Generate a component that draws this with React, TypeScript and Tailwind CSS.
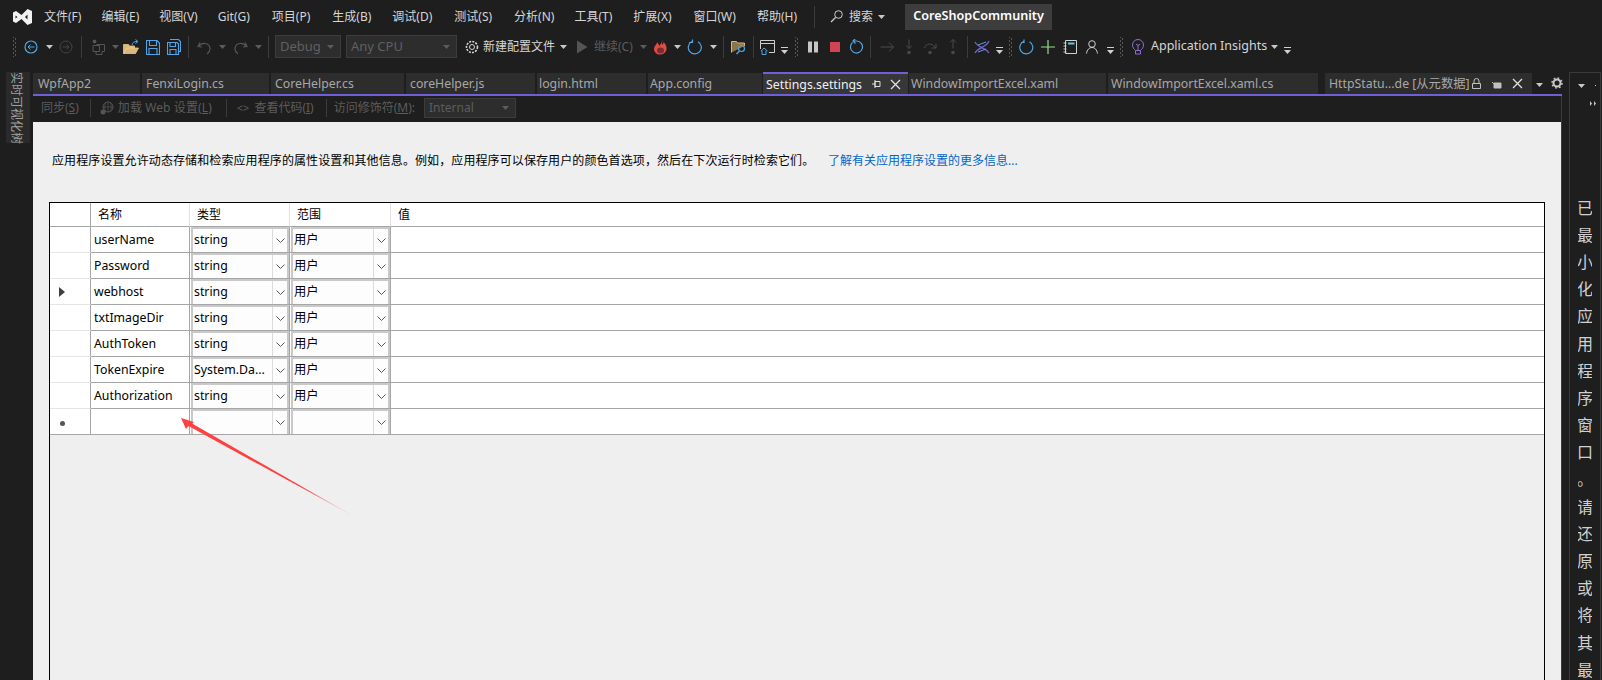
import type { ReactNode } from 'react';

const Caret = ({ className = '', color = '#c8c8c8' }: { className?: string; color?: string }) => (
  <svg width="7" height="4" viewBox="0 0 7 4" className={`shrink-0 ${className}`}>
    <path d="M0 0h7L3.5 4z" fill={color} />
  </svg>
);

const DimCaret = ({ className = '' }: { className?: string }) => <Caret className={className} color="#5c5c5c" />;

const Sep = ({ className = '' }: { className?: string }) => (
  <div className={`h-[22px] w-px shrink-0 bg-[#3c3c3c] ${className}`} />
);

const Grip = ({ className = '' }: { className?: string }) => (
  <svg width="4" height="20" viewBox="0 0 4 20" className={`shrink-0 ${className}`}>
    {[0, 2, 4, 6, 8, 10, 12, 14, 16, 18].map((y) => (
      <g key={y} fill="#5a5a5a">
        <rect x={y % 4 === 0 ? 0 : 2} y={y} width="1" height="1" />
        <rect x={y % 4 === 0 ? 2 : 0} y={y + 1} width="1" height="1" />
      </g>
    ))}
  </svg>
);

const SmallDrop = ({ className = '' }: { className?: string }) => (
  <svg width="7" height="8" viewBox="0 0 7 8" className={`mt-[8px] shrink-0 ${className}`}>
    <path d="M0 0h7v1H0zM0 3h7L3.5 7z" fill="#d0d0d0" />
  </svg>
);

const Ico = ({ w, h = 16, children, className = '' }: { w: number; h?: number; children: ReactNode; className?: string }) => (
  <svg width={w} height={h} viewBox={`0 0 ${w} ${h}`} fill="none" className={`shrink-0 ${className}`}>
    {children}
  </svg>
);

const menus = [
  ['文件(F)', 'ml-[44px]'],
  ['编辑(E)', 'ml-[20px]'],
  ['视图(V)', 'ml-[20px]'],
  ['Git(G)', 'ml-[20px]'],
  ['项目(P)', 'ml-[22px]'],
  ['生成(B)', 'ml-[22px]'],
  ['调试(D)', 'ml-[21px]'],
  ['测试(S)', 'ml-[22px]'],
  ['分析(N)', 'ml-[22px]'],
  ['工具(T)', 'ml-[20px]'],
  ['扩展(X)', 'ml-[21px]'],
  ['窗口(W)', 'ml-[22px]'],
  ['帮助(H)', 'ml-[21px]'],
];

const tabs = [
  ['WpfApp2', 'w-[107px]', 'ml-0', 'pl-[5px]'],
  ['FenxiLogin.cs', 'w-[127px]', 'ml-[2px]', 'pl-[4px]'],
  ['CoreHelper.cs', 'w-[133px]', 'ml-[2px]', 'pl-[4px]'],
  ['coreHelper.js', 'w-[129px]', 'ml-[2px]', 'pl-[4px]'],
  ['login.html', 'w-[109px]', 'ml-[2px]', 'pl-[2px]'],
];

const rows = [
  ['userName', 'string', '用户'],
  ['Password', 'string', '用户'],
  ['webhost', 'string', '用户'],
  ['txtImageDir', 'string', '用户'],
  ['AuthToken', 'string', '用户'],
  ['TokenExpire', 'System.Da...', '用户'],
  ['Authorization', 'string', '用户'],
  ['', '', ''],
];

const sideText = '已最小化应用程序窗口。请还原或将其最'.split('');

const Combo = ({ text }: { text: string }) => (
  <div className="flex h-full items-stretch border-b border-r border-[#a6a6a6] pl-px">
    <div className="flex min-w-0 flex-1 border-2 border-b-0 border-[#c9c9c9] bg-[#fdfdfd]">
      <div className="flex-1 truncate pl-[1px] leading-[22px]">{text}</div>
      <div className="flex w-[15px] items-center justify-center border-l border-[#dcdcdc]">
        <svg width="9" height="5" viewBox="0 0 9 5" fill="none">
          <path d="M.5.5l4 4 4-4" stroke="#555" />
        </svg>
      </div>
    </div>
  </div>
);

const HeaderCell = ({ text, className = '' }: { text: string; className?: string }) => (
  <div className={`border-b border-r border-b-[#a6a6a6] border-r-[#e2e2e2] pl-[7px] leading-[23px] ${className}`}>{text}</div>
);

export default function App() {
  return (
    <div className="relative flex h-[680px] w-[1602px] flex-col overflow-hidden bg-[#1e1e1e] font-['Noto_Sans','Noto_Sans_CJK_SC',sans-serif] text-[12px] text-[#d6d6d6]">
      {/* title bar */}
      <div className="flex h-[33px] shrink-0 items-center">
        <svg width="20" height="18" viewBox="0 0 20 18" className="absolute left-[12px] top-[8px]">
          <path
            fillRule="evenodd"
            d="M1 4.500 4 3l5.500 4L15.500 1 20 3v12l-4.500 2-6-6L4 15l-3-1.500zM3.500 7.500v3L5.500 9zM15.500 6.500 13 9l2.500 2.500z"
            fill="#f2f2f2"
          />
        </svg>
        {menus.map(([label, ml]) => (
          <span key={label} className={`${ml} whitespace-nowrap`}>
            {label}
          </span>
        ))}
        <div className="ml-[17px] h-[22px] w-px bg-[#3c3c3c]" />
        <Ico w={13} h={13} className="ml-[15px]">
          <circle cx="8.500" cy="4.500" r="3.800" stroke="#cfcfcf" />
          <path d="M5.500 7.500 1 12" stroke="#cfcfcf" strokeWidth="1.300" />
        </Ico>
        <span className="ml-[6px]">搜索</span>
        <Caret className="ml-[5px]" />
        <div className="ml-[20px] flex h-[26px] w-[147px] items-center justify-center bg-[#3d3d3d] text-[12.6px] font-semibold text-white">
          CoreShopCommunity
        </div>
      </div>

      {/* main toolbar */}
      <div className="flex h-[27px] shrink-0 items-center">
        <Grip className="ml-[13px]" />
        <Ico w={14} className="ml-[7px]">
          <circle cx="7" cy="8" r="6" stroke="#4ea6e6" strokeWidth="1.200" />
          <path d="M10.500 8h-6.500M6.500 5.500 4 8l2.500 2.500" stroke="#4ea6e6" />
        </Ico>
        <Caret className="ml-[8px]" />
        <Ico w={14} className="ml-[6px]">
          <circle cx="7" cy="8" r="6" stroke="#444" />
          <path d="M3.500 8h6.500M7.500 5.500 10 8l-2.500 2.500" stroke="#444" />
        </Ico>
        <Sep className="ml-[8px]" />
        <Ico w={14} className="ml-[9px]">
          <path d="M5.500 5.500h8v7h-2.500v3h-6v-3M2 6.500h6.500v6H2z" stroke="#555" />
          <path d="M3.500.5v4M1.500 2.500h4M2 1l3 3M5 1 2 4" stroke="#555" />
        </Ico>
        <DimCaret className="ml-[7px]" />
        <Ico w={16} className="ml-[4px]">
          <path d="M.5 14.500V5.500h5l1 1.500h5v2H4l-3.500 5.500 3.500-5.500h11.500l-3 5.500z" fill="#dcb67a" stroke="#e8c88c" strokeWidth=".8" />
          <path d="M9 6c.5-2.500 2-3.500 5-3.500M12.500.5l2.500 2-2.500 2" stroke="#4ea6e6" />
        </Ico>
        <Ico w={14} className="ml-[7px]">
          <path d="M.5 1.500h10.500l2.500 2.500v11.500H.5zM3.500 1.500v5h7v-5M3 15.500v-6h8v6" stroke="#4ea6e6" strokeWidth="1.100" />
        </Ico>
        <Ico w={14} className="ml-[7px]">
          <path d="M3 .5h8.500l2 2v10h-2M.5 3.500h9.500l1.500 1.500v10.500H.5zM3 3.500v4h5.500v-4M3 15.500v-5h6v5" stroke="#4ea6e6" strokeWidth="1.100" />
        </Ico>
        <Sep className="ml-[7px]" />
        <Ico w={14} className="ml-[8px]">
          <path d="M3 3.500 1 7.500l4 .5M1.500 7.500C5 3 12 3.500 13 9c.3 2.500-1 4.500-3 6" stroke="#555" strokeWidth="1.200" />
        </Ico>
        <DimCaret className="ml-[8px]" />
        <Ico w={14} className="ml-[8px]">
          <path d="M11 3.500l2 4-4 .5M12.500 7.500C9 3 2 3.500 1 9c-.3 2.500 1 4.500 3 6" stroke="#555" strokeWidth="1.200" />
        </Ico>
        <DimCaret className="ml-[7px]" />
        <Sep className="ml-[6px]" />
        <div className="ml-[6px] flex h-[23px] w-[66px] items-center justify-between border border-[#3c3c3c] bg-[#2d2d2d] pl-[4px] pr-[6px] text-[13px] text-[#606060]">
          Debug
          <DimCaret />
        </div>
        <div className="ml-[5px] flex h-[23px] w-[111px] items-center justify-between border border-[#3c3c3c] bg-[#2d2d2d] pl-[4px] pr-[6px] text-[13px] text-[#606060]">
          Any CPU
          <DimCaret />
        </div>
        <Ico w={14} className="ml-[8px]">
          <circle cx="7" cy="8" r="5.500" stroke="#d6d6d6" strokeWidth="1.600" strokeDasharray="2 1.200" />
          <circle cx="7" cy="8" r="2.500" stroke="#d6d6d6" />
        </Ico>
        <span className="ml-[4px] w-[73px] whitespace-nowrap">新建配置文件</span>
        <Caret className="ml-[4px]" />
        <Ico w={12} className="ml-[9px]">
          <path d="M1 1.500 11.500 8 1 14.500z" fill="#555" />
        </Ico>
        <span className="ml-[6px] w-[39px] whitespace-nowrap text-[#5c5c5c]">继续(C)</span>
        <DimCaret className="ml-[7px]" />
        <Ico w={15} className="ml-[6px]">
          <path d="M9 .5c1 3-1 3.500.5 5 .8-.5 1-1.500 1-2.500 2 2 3.500 4.500 3 7.500-.5 3-3.500 5-6.500 5s-6-2-6-5.500C1 7 3.500 6 4 3.500c1.500 1 2 2 2 3.500C7.500 5.500 9.500 3.500 9 .5z" fill="#e24b3e" />
          <ellipse cx="7.500" cy="11.500" rx="3.500" ry="3" fill="#7a2c33" />
        </Ico>
        <Caret className="ml-[6px]" />
        <Ico w={15} className="ml-[6px]">
          <path d="M5 2.500a6.500 6.500 0 1 0 6 .2M5.500.5v3H2" stroke="#4ea6e6" strokeWidth="1.200" />
        </Ico>
        <Caret className="ml-[8px]" />
        <Sep className="ml-[6px]" />
        <Ico w={16} className="ml-[7px]">
          <path d="M.5 13.500v-11h5l1 1.500h7v3" stroke="#dcb67a" fill="#8a7448" />
          <circle cx="10.500" cy="9.500" r="3" stroke="#4ea6e6" strokeWidth="1.200" />
          <path d="M8.500 12 5.500 15" stroke="#4ea6e6" strokeWidth="1.400" />
        </Ico>
        <Sep className="ml-[6px]" />
        <Ico w={15} className="ml-[6px]">
          <path d="M.5 1.500h14v12H9M.5 10V1.500M.5 4.500h14" stroke="#cfcfcf" />
          <path d="M1 12l3-3 3.500 3M2 11.500v4h4v-4" stroke="#4ea6e6" />
        </Ico>
        <SmallDrop className="ml-[6px]" />
        <Grip className="ml-[7px]" />
        <Ico w={12} className="ml-[8px]">
          <path d="M1 2.500h4v11H1zM7 2.500h4v11H7z" fill="#c6c6c6" />
        </Ico>
        <Ico w={10} className="ml-[11px]">
          <path d="M0 3h10v10H0z" fill="#d24454" />
        </Ico>
        <Ico w={14} className="ml-[9px]">
          <path d="M3.500 3.500a6 6 0 1 0 4-1.500H4M6.500-.5 4 2l2.500 2.500" stroke="#4ea6e6" strokeWidth="1.200" />
        </Ico>
        <Sep className="ml-[7px]" />
        <Ico w={14} className="ml-[9px]">
          <path d="M.5 8h13M9 3.500 13.500 8 9 12.500" stroke="#4a4a4a" />
        </Ico>
        <Ico w={12} className="ml-[9px]">
          <path d="M6 .5v9M3 6.500l3 3 3-3" stroke="#4a4a4a" />
          <circle cx="6" cy="13.500" r="1.800" fill="#4a4a4a" />
        </Ico>
        <Ico w={14} className="ml-[8px]">
          <path d="M1.500 9c1-4.500 8-6 11 0M13 4.500V9H8.500" stroke="#4a4a4a" />
          <circle cx="7" cy="13.500" r="1.800" fill="#4a4a4a" />
        </Ico>
        <Ico w={12} className="ml-[10px]">
          <path d="M6 9.500v-9M3 3.500l3-3 3 3" stroke="#4a4a4a" />
          <circle cx="6" cy="13.500" r="1.800" fill="#4a4a4a" />
        </Ico>
        <Sep className="ml-[8px]" />
        <Ico w={16} className="ml-[6px]">
          <path d="M1 14C4 8 12 9 15 2M1 3c3 6 10 5 14 11" stroke="#7b62c9" strokeWidth="1.300" />
          <path d="M4 6l8-3M4 13l8-3" stroke="#4ea6e6" />
        </Ico>
        <SmallDrop className="ml-[6px]" />
        <Grip className="ml-[6px]" />
        <Ico w={15} className="ml-[6px]">
          <path d="M4.500 2.500a6.500 6.500 0 1 0 6 .2M5 .5v3H2" stroke="#4ea6e6" strokeWidth="1.200" />
        </Ico>
        <Ico w={14} className="ml-[7px]">
          <path d="M7 1v14M0 8h14" stroke="#8fe388" strokeWidth="1.200" />
        </Ico>
        <Ico w={14} className="ml-[8px]">
          <path d="M2.500 1.500h11v13h-11zM.5 4h3M.5 7h3M.5 10h3M.5 13h3" stroke="#d0d0d0" />
          <path d="M5 3.500h6.500v2H5z" fill="#5cc8d8" />
        </Ico>
        <Ico w={12} className="ml-[9px]">
          <circle cx="6" cy="5" r="3.300" stroke="#d0d0d0" />
          <path d="M.5 14.500c.5-3.500 2.500-6 5.500-6s5 2.500 5.500 6" stroke="#d0d0d0" />
        </Ico>
        <SmallDrop className="ml-[9px]" />
        <Grip className="ml-[6px]" />
        <Ico w={14} className="ml-[7px]">
          <path d="M4.500 11.500C3 10 1.500 8.500 1.500 6a5.500 5.500 0 0 1 11 0c0 2.500-1.500 4-3 5.500zM4.500 11.500v3.500h5v-3.500M7 11V6M5 5l2 1.500L9 5" stroke="#8e6fd0" />
        </Ico>
        <span className="ml-[6px] w-[113px] whitespace-nowrap text-[12.5px]">Application Insights</span>
        <Caret className="ml-[7px]" />
        <SmallDrop className="ml-[6px]" />
      </div>

      {/* body */}
      <div className="flex min-h-0 flex-1 pt-[12px]">
        <div className="w-[33px] shrink-0">
          <div className="ml-[6px] h-[71px] w-[24px] whitespace-nowrap bg-[#2a2a2a] pr-[4px] leading-[20px] text-[#a0a0a0] [text-orientation:sideways] [writing-mode:vertical-rl]">
            实时可视化树
          </div>
        </div>

        <div className="flex w-[1529px] shrink-0 flex-col">
          {/* document tabs */}
          <div className="flex h-[22px] shrink-0 items-end text-[12.3px] leading-[21px] text-[#a8a8a8]">
            {tabs.map(([name, w, ml, pl]) => (
              <div key={name} className={`${w} ${ml} ${pl} h-[21px] shrink-0 bg-[#2d2d2d]`}>
                {name}
              </div>
            ))}
            <div className="ml-[2px] h-[21px] w-[114px] shrink-0 bg-[#2d2d2d] pl-[2px]">App.config</div>
            <div className="ml-px flex h-[22px] w-[145px] shrink-0 items-center border-t-2 border-[#6f5fd8] bg-[#373737] pl-[3px] text-[#f0f0f0]">
              <span className="w-[100px]">Settings.settings</span>
              <Ico w={10} h={10} className="ml-[6px]">
                <path d="M0 5h3M3 2.500h5v5H3zM3 1v8" stroke="#e0e0e0" />
              </Ico>
              <Ico w={11} h={11} className="ml-[8px]">
                <path d="M1 1l9 9M10 1l-9 9" stroke="#e0e0e0" strokeWidth="1.300" />
              </Ico>
            </div>
            <div className="ml-px h-[21px] w-[197px] shrink-0 bg-[#2d2d2d] pl-[2px]">WindowImportExcel.xaml</div>
            <div className="ml-[2px] h-[21px] w-[210px] shrink-0 bg-[#2d2d2d] pl-[3px]">WindowImportExcel.xaml.cs</div>
            <div className="ml-[7px] flex h-[21px] w-[207px] shrink-0 items-center bg-[#2d2d2d] pl-[4px]">
              <span className="w-[139px] whitespace-nowrap">HttpStatu...de [从元数据]</span>
              <Ico w={9} h={11} className="ml-[4px]">
                <path d="M2 5V3a2.500 2.500 0 0 1 5 0v2M.5 5.500h8v5h-8z" stroke="#c0c0c0" />
              </Ico>
              <Ico w={10} h={10} className="ml-[11px]">
                <path d="M0 3l3 3M2 4h7v5H2z" fill="#c0c0c0" stroke="#c0c0c0" />
              </Ico>
              <Ico w={11} h={11} className="ml-[10px]">
                <path d="M1 1l9 9M10 1l-9 9" stroke="#e0e0e0" strokeWidth="1.300" />
              </Ico>
            </div>
            <Caret className="mb-[7px] ml-[4px]" />
            <Ico w={12} h={12} className="mb-[5px] ml-[8px]">
              <circle cx="6" cy="6" r="3.500" stroke="#c8c8c8" strokeWidth="2" />
              <circle cx="6" cy="6" r="5" stroke="#c8c8c8" strokeWidth="1.500" strokeDasharray="1.800 2.100" />
            </Ico>
          </div>
          <div className="h-[2px] shrink-0 bg-[#6f5fd8]" />

          {/* settings designer */}
          <div className="flex min-h-0 flex-1 flex-col border-r border-[#3c3c3c]">
            <div className="flex h-[24px] shrink-0 items-center text-[#5c5c5c]">
              <span className="ml-[8px] whitespace-nowrap">
                同步(<span className="underline">S</span>)
              </span>
              <Sep className="ml-[11px] !h-[18px]" />
              <Ico w={15} h={15} className="ml-[9px]">
                <circle cx="8" cy="6" r="5" stroke="#555" />
                <path d="M3 6h10M8 1v10M5.500 1.500c-1 3-1 6 0 9M10.500 1.500c1 3 1 6 0 9" stroke="#555" strokeWidth=".7" />
                <circle cx="3" cy="11" r="2.500" fill="#555" />
              </Ico>
              <span className="ml-[3px] w-[96px] whitespace-nowrap tracking-[0.1px]">
                加载 Web 设置(<span className="underline">L</span>)
              </span>
              <Sep className="ml-[12px] !h-[18px]" />
              <span className="ml-[10px] text-[11px]">&lt;&gt;</span>
              <span className="ml-[5px] whitespace-nowrap">
                查看代码(<span className="underline">I</span>)
              </span>
              <Sep className="ml-[12px] !h-[18px]" />
              <span className="ml-[7px] whitespace-nowrap">
                访问修饰符(<span className="underline">M</span>):
              </span>
              <div className="ml-[9px] flex h-[20px] w-[92px] items-center justify-between border border-[#3c3c3c] bg-[#2d2d2d] pl-[4px] pr-[6px] text-[#5c5c5c]">
                Internal
                <DimCaret />
              </div>
            </div>

            <div className="mt-[2px] flex min-h-0 flex-1 flex-col bg-[#efefef] text-black">
              <div className="ml-[19px] mt-[31px] flex h-[16px] shrink-0 items-center whitespace-nowrap leading-[16px]">
                <span className="w-[756px] tracking-[0.1px]">
                  应用程序设置允许动态存储和检索应用程序的属性设置和其他信息。例如，应用程序可以保存用户的颜色首选项，然后在下次运行时检索它们。
                </span>
                <span className="ml-[20px] text-[#0066cc]">了解有关应用程序设置的更多信息...</span>
              </div>

              <div className="mx-[16px] mt-[33px] min-h-0 flex-1 border-x border-t border-black">
                <div className="grid grid-cols-[41px_99px_100px_101px_1fr] grid-rows-[24px] auto-rows-[26px] bg-white">
                  <HeaderCell text="" className="!border-r-[#a6a6a6]" />
                  <HeaderCell text="名称" />
                  <HeaderCell text="类型" />
                  <HeaderCell text="范围" />
                  <div className="border-b border-[#a6a6a6] pl-[7px] leading-[23px]">值</div>
                  {rows.map(([name, type, scope], i) => (
                    <div key={i} className="contents">
                      <div
                        className={`flex items-center border-r border-r-[#a6a6a6] pl-[9px] ${
                          i === 7 ? 'border-b border-b-[#a6a6a6]' : 'border-b border-b-[#e6e6e6]'
                        }`}
                      >
                        {i === 2 && (
                          <svg width="6" height="10" viewBox="0 0 6 10">
                            <path d="M0 0l6 5-6 5z" fill="#404040" />
                          </svg>
                        )}
                        {i === 7 && <div className="ml-px mt-[3px] h-[5px] w-[5px] rounded-full bg-[#555]" />}
                      </div>
                      <div className="truncate border-b border-r border-[#a6a6a6] pl-[3px] text-[12.3px] leading-[25px]">{name}</div>
                      <div className="text-[12.3px]">
                        <Combo text={type} />
                      </div>
                      <div className="text-[12.3px]">
                        <Combo text={scope} />
                      </div>
                      <div className="border-b border-[#a6a6a6]" />
                    </div>
                  ))}
                </div>
              </div>
            </div>
          </div>
        </div>

        {/* collapsed side panel */}
        <div className="ml-[7px] w-[32px] shrink-0 border-x border-t border-[#3a3a3a]">
          <div className="relative h-[121px]">
            <Caret className="absolute left-[8px] top-[11px]" />
            <div className="absolute left-[25px] top-[12px] h-px w-px bg-[#c8c8c8]" />
            <svg width="6" height="5" viewBox="0 0 6 5" className="absolute left-[20px] top-[28px]">
              <path d="M0 0l2 2.500L0 5zM4 0l2 2.500L4 5z" fill="#c8c8c8" />
            </svg>
          </div>
          <div className="flex flex-col items-center overflow-hidden text-[16px] text-[#d0d0d0]">
            {sideText.map((c, i) => (
              <div key={i} className="flex h-[27.2px] w-[14px] shrink-0 items-center justify-center overflow-hidden leading-none">
                {c}
              </div>
            ))}
          </div>
        </div>
      </div>

      {/* red annotation arrow */}
      <svg width="182" height="106" viewBox="0 0 182 106" className="absolute left-[178px] top-[415px]">
        <defs>
          <linearGradient id="fade" gradientUnits="userSpaceOnUse" x1="120" y1="70" x2="177" y2="102">
            <stop offset="0" stopColor="#ff4040" />
            <stop offset="1" stopColor="#ff4040" stopOpacity="0.15" />
          </linearGradient>
        </defs>
        <path d="M3 3 16 7 14 8.500 177 102 10.500 11 8 14z" fill="url(#fade)" />
      </svg>
    </div>
  );
}
